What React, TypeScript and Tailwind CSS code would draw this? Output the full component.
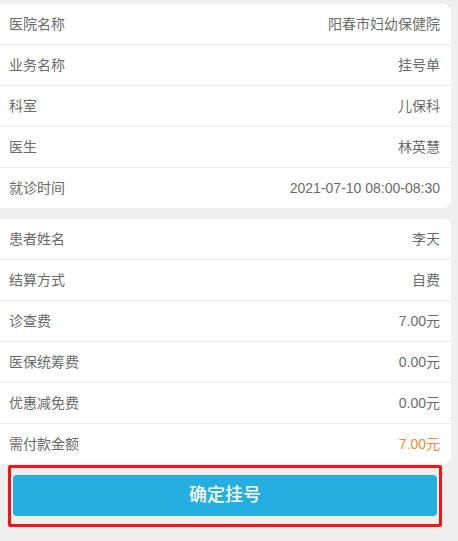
import React from "react";

const baseInfo = [
  ["医院名称", "阳春市妇幼保健院"],
  ["业务名称", "挂号单"],
  ["科室", "儿保科"],
  ["医生", "林英慧"],
  ["就诊时间", "2021-07-10 08:00-08:30"],
];

const payInfo = [
  ["患者姓名", "李天"],
  ["结算方式", "自费"],
  ["诊查费", "7.00元"],
  ["医保统筹费", "0.00元"],
  ["优惠减免费", "0.00元"],
  ["需付款金额", "7.00元"],
];

const Row = ({ label, value, last, highlight }: { label: string; value: string; last?: boolean; highlight?: boolean }) => (
  <div
    className={
      last
        ? "h-[40px] flex items-center justify-between pl-[9px] pr-[11px] text-[14px]"
        : "h-[41px] flex items-center justify-between pl-[9px] pr-[11px] text-[14px] border-b border-[#ececec]"
    }
  >
    <span className="text-[#6b6b6b]">{label}</span>
    <span className={highlight ? "text-[#f5883a]" : "text-[#6b6b6b]"}>{value}</span>
  </div>
);

const App = () => {
  return (
    <div
      className="min-h-screen w-[458px] bg-[#efefef] pt-[4px]"
      style={{ fontFamily: '"Liberation Sans", "Noto Sans CJK SC", sans-serif' }}
    >
      {/* 就诊信息 */}
      <div className="w-[451px] bg-white rounded-r-lg">
        {baseInfo.map(([l, v], i) => (
          <Row key={l} label={l} value={v} last={i === baseInfo.length - 1} />
        ))}
      </div>
      {/* 费用信息 */}
      <div className="mt-[11px] w-[451px] bg-white rounded-r-lg">
        {payInfo.map(([l, v], i) => (
          <Row
            key={l}
            label={l}
            value={v}
            last={i === payInfo.length - 1}
            highlight={i === payInfo.length - 1}
          />
        ))}
      </div>
      <div className="mt-[1px] ml-[8px] w-[434px] border-[3px] border-[#f31414] rounded-[2px] px-[2px] pt-[7px] pb-[8px]">
        <button className="w-full h-[41px] rounded-[4px] bg-[#24afe0] text-white text-[18px] font-medium">
          确定挂号
        </button>
      </div>
    </div>
  );
};

export default App;
